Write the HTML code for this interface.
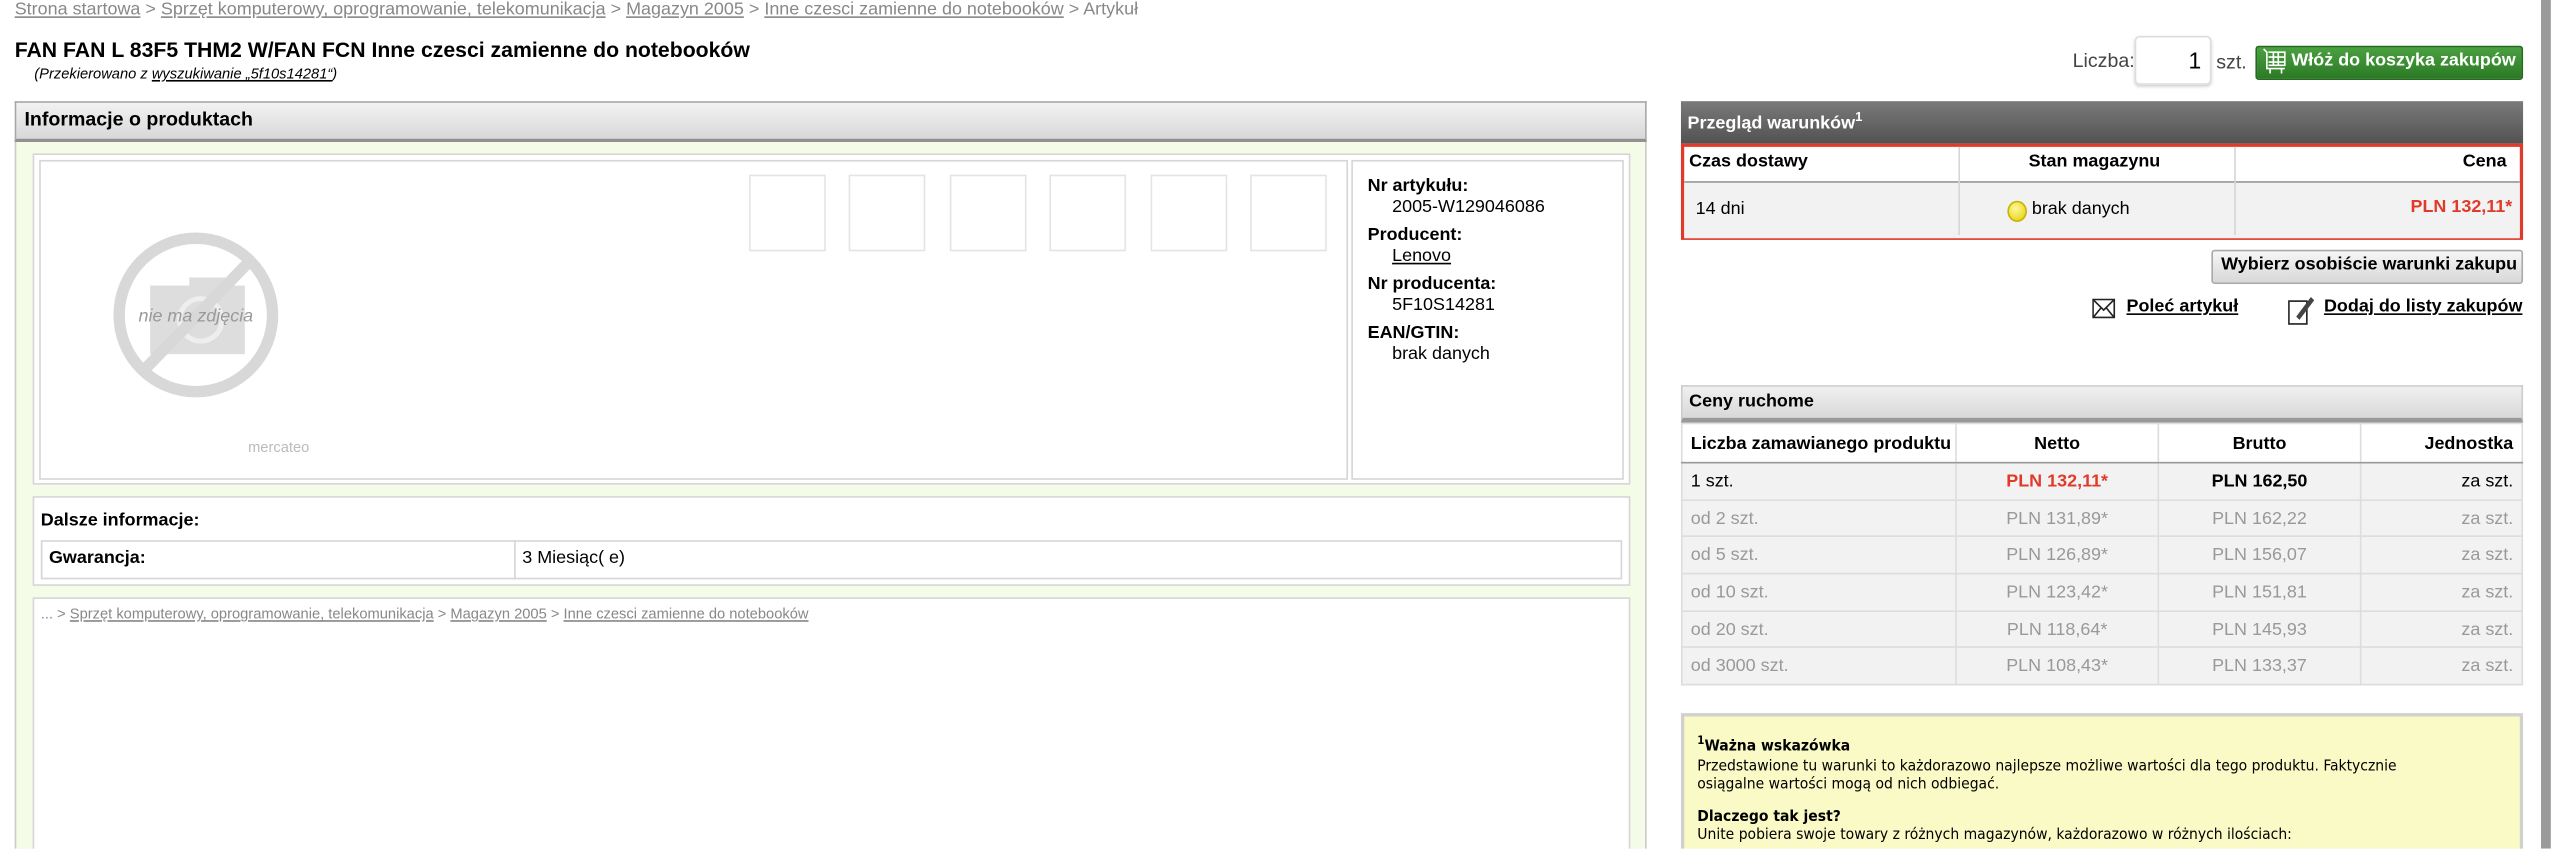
<!DOCTYPE html>
<html><head><meta charset="utf-8"><style>
html,body{margin:0;padding:0;background:#fff;overflow:hidden;width:2559px;height:848px}
#w{position:absolute;left:0;top:0;width:1568px;height:520px;overflow:hidden;transform:scale(1.632);transform-origin:0 0;font-family:"Liberation Sans",Arial,sans-serif;font-size:12px;color:#000}
.a{position:absolute;white-space:nowrap}
.g{color:#888}
u{text-decoration:underline}
.tb{border-collapse:collapse;position:absolute;table-layout:fixed}
.tb td{padding:0 5px;font-size:11px;height:21.7px;white-space:nowrap;border:1px solid #ddd}
.thumb{position:absolute;top:107px;width:45px;height:45px;border:1px solid #e4e4e4;background:#fff}
</style></head><body><div id="w">
<div class="a g" style="left:9px;top:0px;font-size:11px"><u>Strona startowa</u> &gt; <u>Sprzęt komputerowy, oprogramowanie, telekomunikacja</u> &gt; <u>Magazyn 2005</u> &gt; <u>Inne czesci zamienne do notebooków</u> &gt; Artykuł</div>
<div class="a" style="left:9px;top:23px;font-size:13px;font-weight:bold">FAN FAN L 83F5 THM2 W/FAN FCN Inne czesci zamienne do notebooków</div>
<div class="a" style="left:21px;top:40px;font-size:9px;font-style:italic">(Przekierowano z <u>wyszukiwanie „5f10s14281“</u>)</div>

<div class="a" style="left:9px;top:62px;width:998px;height:22px;background:linear-gradient(#f2f2f2,#d8d8d8);border:1px solid #a8a8a8;border-bottom:2px solid #909090"></div>
<div class="a" style="left:15px;top:66px;font-weight:bold;font-size:12px">Informacje o produktach</div>
<div class="a" style="left:9px;top:87px;width:998px;height:440px;background:#f4fbe6;border-left:1px solid #ccc;border-right:1px solid #ccc"></div>
<div class="a" style="left:20px;top:94px;width:977px;height:201px;background:#fff;border:1px solid #d6d6d6"></div>
<div class="a" style="left:24px;top:98px;width:800px;height:194px;border:1px solid #d6d6d6"></div>
<div class="a" style="left:828px;top:98px;width:165px;height:194px;border:1px solid #d6d6d6"></div>
<div class="thumb" style="left:459px"></div><div class="thumb" style="left:520px"></div><div class="thumb" style="left:582px"></div><div class="thumb" style="left:643px"></div><div class="thumb" style="left:705px"></div><div class="thumb" style="left:766px"></div>
<svg class="a" style="left:66px;top:139px" width="110" height="110" viewBox="0 0 110 110">
<rect x="26" y="36" width="58" height="42" fill="#ddd"/><rect x="50" y="31" width="22" height="6" fill="#ddd"/>
<circle cx="57" cy="57" r="13" fill="none" stroke="#eee" stroke-width="3"/>
<circle cx="54" cy="54" r="47" fill="none" stroke="#d8d8d8" stroke-width="7"/>
<line x1="22" y1="88" x2="88" y2="20" stroke="#d8d8d8" stroke-width="7"/>
<text x="54" y="58" text-anchor="middle" font-family="Liberation Sans,sans-serif" font-style="italic" font-size="11" fill="#999">nie ma zdjęcia</text>
</svg>
<div class="a" style="left:152px;top:269px;font-size:9px;color:#bbb">mercateo</div>
<div class="a" style="left:838px;top:108px;line-height:13px;font-size:11px">
<b>Nr artykułu:</b><br><span style="padding-left:15px">2005-W129046086</span><br>
<div style="height:4px"></div><b>Producent:</b><br><span style="padding-left:15px"><u>Lenovo</u></span><br>
<div style="height:4px"></div><b>Nr producenta:</b><br><span style="padding-left:15px">5F10S14281</span><br>
<div style="height:4px"></div><b>EAN/GTIN:</b><br><span style="padding-left:15px">brak danych</span></div>

<div class="a" style="left:20px;top:304px;width:977px;height:53px;background:#fff;border:1px solid #d6d6d6"></div>
<div class="a" style="left:25px;top:313px;font-weight:bold;font-size:11px">Dalsze informacje:</div>
<div class="a" style="left:25px;top:331px;width:967px;height:22px;border:1px solid #d6d6d6"></div>
<div class="a" style="left:315px;top:331px;width:0;height:24px;border-left:1px solid #d6d6d6"></div>
<div class="a" style="left:30px;top:336px;font-weight:bold;font-size:11px">Gwarancja:</div>
<div class="a" style="left:320px;top:336px;font-size:11px">3 Miesiąc( e)</div>
<div class="a" style="left:20px;top:366px;width:977px;height:170px;background:#fff;border:1px solid #d6d6d6"></div>
<div class="a g" style="left:25px;top:371px;font-size:9px">... &gt; <u>Sprzęt komputerowy, oprogramowanie, telekomunikacja</u> &gt; <u>Magazyn 2005</u> &gt; <u>Inne czesci zamienne do notebooków</u></div>

<div class="a" style="left:1270px;top:30px;color:#444">Liczba:</div>
<div class="a" style="left:1308px;top:22px;width:45px;height:28px;border:1px solid #ddd;border-radius:3px;box-shadow:0 1px 2px #ccc"></div>
<div class="a" style="left:1341px;top:29px;font-size:14px">1</div>
<div class="a" style="left:1358px;top:31px;color:#444">szt.</div>
<div class="a" style="left:1382px;top:28px;width:162px;height:19px;background:linear-gradient(#4aa040,#2b7a25);border:1px solid #246a1f;border-radius:2px"></div>
<svg class="a" style="left:1385px;top:29px" width="18" height="18" viewBox="0 0 18 18"><path d="M2 1 L4 3 L4 13 L15 13 M5 3h10v8H5 M5 6h10 M5 9h10 M8 3v8 M11 3v8 M6 13v3 M13 13v3" stroke="#fff" fill="none" stroke-width="1"/></svg>
<div class="a" style="left:1404px;top:31px;color:#fff;font-weight:bold;font-size:11px">Włóż do koszyka zakupów</div>

<div class="a" style="left:1030px;top:62px;width:516px;height:26px;background:linear-gradient(#7a7a7a,#525252)"></div>
<div class="a" style="left:1034px;top:67px;color:#fff;font-weight:bold;font-size:11px">Przegląd warunków<sup style="font-size:8px">1</sup></div>
<div class="a" style="left:1030px;top:88px;width:512px;height:55px;border:2px solid #e03a2a;background:#fff"></div>
<div class="a" style="left:1032px;top:111px;width:512px;height:34px;background:#f2f2f2;border-top:1px solid #999"></div>
<div class="a" style="left:1200px;top:90px;height:54px;border-left:1px solid #d6d6d6"></div>
<div class="a" style="left:1369px;top:90px;height:54px;border-left:1px solid #d6d6d6"></div>
<div class="a" style="left:1035px;top:93px;font-weight:bold;font-size:11px">Czas dostawy</div>
<div class="a" style="left:1243px;top:93px;font-weight:bold;font-size:11px">Stan magazynu</div>
<div class="a" style="left:1509px;top:93px;font-weight:bold;font-size:11px">Cena</div>
<div class="a" style="left:1039px;top:122px;font-size:11px">14 dni</div>
<div class="a" style="left:1230px;top:123px;width:10px;height:11px;border-radius:50%;background:radial-gradient(circle at 40% 35%,#fff79a,#e3cf00);border:1px solid #c8b400"></div>
<div class="a" style="left:1245px;top:122px;font-size:11px">brak danych</div>
<div class="a" style="left:1477px;top:121px;font-size:11px;font-weight:bold;color:#e03a2a">PLN 132,11*</div>

<div class="a" style="left:1355px;top:153px;width:189px;height:19px;background:linear-gradient(#f6f6f6,#d8d8d8);border:1px solid #aaa;border-radius:2px"></div>
<div class="a" style="left:1361px;top:156px;font-size:11px;font-weight:bold">Wybierz osobiście warunki zakupu</div>
<svg class="a" style="left:1282px;top:183px" width="15" height="13"><rect x="0.5" y="0.5" width="13" height="11" fill="#fff" stroke="#222"/><path d="M1 1L7 7L13 1M1 11L5.5 5.5M13 11L8.5 5.5" stroke="#222" fill="none"/></svg>
<div class="a" style="left:1303px;top:182px;font-size:11px;font-weight:bold"><u>Poleć artykuł</u></div>
<svg class="a" style="left:1402px;top:180px" width="18" height="20"><rect x="0.5" y="4.5" width="11" height="14" fill="#fff" stroke="#222"/><path d="M5 14L14 2L16 4L7 16Z" fill="#444"/></svg>
<div class="a" style="left:1424px;top:182px;font-size:11px;font-weight:bold"><u>Dodaj do listy zakupów</u></div>

<div class="a" style="left:1030px;top:236px;width:514px;height:19px;background:linear-gradient(#f0f0f0,#d8d8d8);border:1px solid #ccc;border-bottom:3px solid #999"></div>
<div class="a" style="left:1035px;top:240px;font-weight:bold;font-size:11px">Ceny ruchome</div>
<table class="tb" style="left:1030px;top:259px;width:516px">
<colgroup><col style="width:168px"><col style="width:124px"><col style="width:124px"><col></colgroup>
<tr style="background:#fff;font-weight:bold"><td style="height:23px;border-bottom:1px solid #999">Liczba zamawianego produktu</td><td style="text-align:center;border-bottom:1px solid #999">Netto</td><td style="text-align:center;border-bottom:1px solid #999">Brutto</td><td style="text-align:right;border-bottom:1px solid #999">Jednostka</td></tr>
<tr style="background:#f2f2f2"><td>1 szt.</td><td style="text-align:center;color:#e03a2a;font-weight:bold">PLN 132,11*</td><td style="text-align:center;font-weight:bold">PLN 162,50</td><td style="text-align:right">za szt.</td></tr>
<tr style="background:#f2f2f2;color:#999"><td>od 2 szt.</td><td style="text-align:center">PLN 131,89*</td><td style="text-align:center">PLN 162,22</td><td style="text-align:right">za szt.</td></tr>
<tr style="background:#f2f2f2;color:#999"><td>od 5 szt.</td><td style="text-align:center">PLN 126,89*</td><td style="text-align:center">PLN 156,07</td><td style="text-align:right">za szt.</td></tr>
<tr style="background:#f2f2f2;color:#999"><td>od 10 szt.</td><td style="text-align:center">PLN 123,42*</td><td style="text-align:center">PLN 151,81</td><td style="text-align:right">za szt.</td></tr>
<tr style="background:#f2f2f2;color:#999"><td>od 20 szt.</td><td style="text-align:center">PLN 118,64*</td><td style="text-align:center">PLN 145,93</td><td style="text-align:right">za szt.</td></tr>
<tr style="background:#f2f2f2;color:#999"><td>od 3000 szt.</td><td style="text-align:center">PLN 108,43*</td><td style="text-align:center">PLN 133,37</td><td style="text-align:right">za szt.</td></tr>
</table>

<div class="a" style="left:1030px;top:437px;width:512px;height:100px;background:#fafac6;border:2px solid #d0d0d0"></div>
<div class="a" style="left:1040px;top:449px;font-family:'DejaVu Sans Condensed','DejaVu Sans',sans-serif;font-size:9.5px;line-height:11.5px;white-space:normal;width:470px">
<b><sup style="font-size:7px">1</sup>Ważna wskazówka</b><br>Przedstawione tu warunki to każdorazowo najlepsze możliwe wartości dla tego produktu. Faktycznie osiągalne wartości mogą od nich odbiegać.<br><div style="height:8px"></div><b>Dlaczego tak jest?</b><br>Unite pobiera swoje towary z różnych magazynów, każdorazowo w różnych ilościach:</div>
<div class="a" style="left:1557px;top:0;width:6px;height:520px;background:#9a9a9a"></div>
</div></body></html>
